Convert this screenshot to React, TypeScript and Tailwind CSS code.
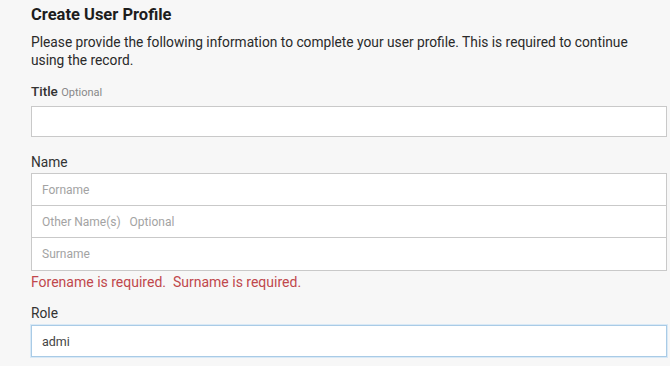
import React from 'react';

export default function App() {
  return (
    <div className="min-h-screen bg-[#f7f7f7] text-[#222] font-['Roboto',sans-serif] antialiased">
      <div className="pl-[31px] pr-[3px] pt-[5px]">
        {/* heading */}
        <h1 className="text-[16.5px] font-bold leading-[20px] text-[#1d1d1d]">Create User Profile</h1>
        <p className="mt-[8px] text-[13.75px] leading-[18px] text-[#2a2a2a] pr-[30px]">
          Please provide the following information to complete your user profile. This is required to continue
          using the record.
        </p>

        {/* title */}
        <label className="mt-[13px] block text-[13.5px] leading-[18px] font-medium text-[#333]">
          Title <span className="text-[11px] font-normal text-[#888]">Optional</span>
        </label>
        <input
          type="text"
          className="mt-[4px] block h-[31px] w-full border border-[#c9c9c9] bg-white px-[10px] text-[12px] outline-none"
        />

        {/* name group */}
        <label className="mt-[16px] block text-[13.75px] leading-[18px] text-[#333]">Name</label>
        <div className="mt-[2px] border border-[#c9c9c9] bg-white">
          <input
            type="text"
            placeholder="Forname"
            className="block h-[32px] w-full border-b border-[#c9c9c9] px-[10px] text-[12px] placeholder:text-[#a3a3a3] outline-none"
          />
          <input
            type="text"
            placeholder="Other Name(s)   Optional"
            className="block h-[32px] w-full border-b border-[#c9c9c9] px-[10px] text-[12px] placeholder:text-[#a3a3a3] outline-none"
          />
          <input
            type="text"
            placeholder="Surname"
            className="block h-[32px] w-full px-[10px] text-[12px] placeholder:text-[#a3a3a3] outline-none"
          />
        </div>
        <p className="mt-[2px] text-[14px] leading-[18px] text-[#c0474c] whitespace-pre">
          {'Forename is required.  Surname is required.'}
        </p>

        {/* role */}
        <label className="mt-[13px] block text-[13.75px] leading-[18px] text-[#333]">Role</label>
        <input
          type="text"
          defaultValue="admi"
          className="mt-[3px] block h-[32px] w-full border border-[#a9cbe6] bg-white px-[10px] text-[12.5px] text-[#444] shadow-[0_0_0_1px_#d9e9f6] outline-none"
        />
      </div>
    </div>
  );
}
